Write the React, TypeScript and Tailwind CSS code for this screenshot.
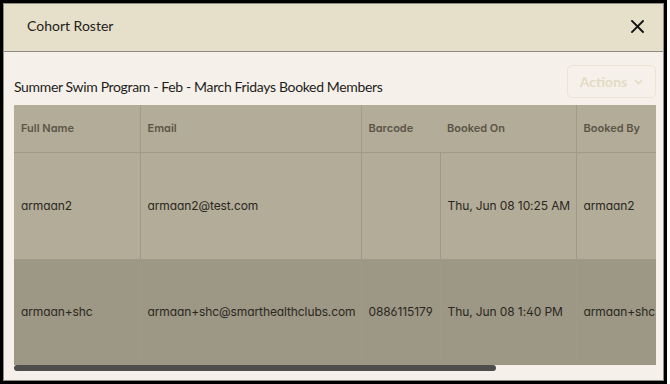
import React from "react";

const rows = [
  {
    name: "armaan2",
    email: "armaan2@test.com",
    barcode: "",
    on: "Thu, Jun 08 10:25 AM",
    by: "armaan2",
    bg: "bg-[#b3ac98]",
    h: "h-[107px]",
  },
  {
    name: "armaan+shc",
    email: "armaan+shc@smarthealthclubs.com",
    barcode: "0886115179",
    on: "Thu, Jun 08 1:40 PM",
    by: "armaan+shc",
    bg: "bg-[#9d9785]",
    h: "h-[106px]",
  },
];

export default function App() {
  return (
    <div className="w-[670px] h-[384px] bg-white">
      <div className="w-[667px] h-[384px] border-[3px] border-black">
        <div className="w-full h-full border border-[#8f8c84] bg-[#f5f1ea] flex flex-col">
          <div className="h-[48px] shrink-0 bg-[#e6dfca] border-b border-[#8d8a82] flex items-center justify-between pl-[23px] pr-[19px] pb-[4px]">
            <span className="text-[14px] text-[#1f1d1a] [font-family:Lato,sans-serif]">
              Cohort Roster
            </span>
            <svg width="13" height="13" viewBox="0 0 13 13" className="mt-[2px]">
              <path d="M1 1 L12 12 M12 1 L1 12" stroke="#111" strokeWidth="1.9" strokeLinecap="square" />
            </svg>
          </div>
          <div className="flex-1 pl-[10px] pr-[7px] pt-[13px]">
            <div className="flex items-end justify-between">
              <span className="mb-[1px] text-[14px] leading-[20px] tracking-[-0.35px] text-[#1f1d1a] [font-family:Lato,sans-serif]">
                Summer Swim Program - Feb - March Fridays Booked Members
              </span>
              <div className="w-[89px] h-[33px] rounded-[5px] border border-[#ebe4d2] flex items-center justify-center gap-[7px] text-[#e4dac5] text-[14px] font-bold [font-family:Lato,sans-serif]">
                <span>Actions</span>
                <svg width="9" height="6" viewBox="0 0 9 6">
                  <path d="M1 1 L4.5 4.5 L8 1" stroke="#e4dac5" strokeWidth="1.6" fill="none" />
                </svg>
              </div>
            </div>
            <div className="mt-[7px] w-[642px] overflow-hidden">
              <table className="table-fixed border-collapse w-[760px] [font-family:Inter,sans-serif] [font-feature-settings:'cv11','ss01']">
                <colgroup>
                  <col className="w-[126px]" />
                  <col className="w-[221px]" />
                  <col className="w-[79px]" />
                  <col className="w-[136px]" />
                  <col className="w-[198px]" />
                </colgroup>
                <thead>
                  <tr className="h-[47px] bg-[#b3ac98] text-[11px] text-[#5b5547] text-left">
                    <th className="pl-[7px] font-semibold">Full Name</th>
                    <th className="pl-[7px] font-semibold border-l border-[#a29b88]">Email</th>
                    <th className="pl-[7px] font-semibold border-l border-[#a29b88]">Barcode</th>
                    <th className="pl-[7px] font-semibold">Booked On</th>
                    <th className="pl-[7px] font-semibold border-l border-[#a29b88]">Booked By</th>
                  </tr>
                </thead>
                <tbody>
                  {rows.map((r) => (
                    <tr key={r.name} className={`${r.h} ${r.bg} border-t border-[#a09985] text-[12px] tracking-[-0.1px] text-[#2a2721] whitespace-nowrap`}>
                      <td className="pl-[7px]">{r.name}</td>
                      <td className="pl-[7px] border-l border-[#a09985]">{r.email}</td>
                      <td className="pl-[7px] border-l border-[#a09985]">{r.barcode}</td>
                      <td className="pl-[7px] border-l border-[#a09985]">{r.on}</td>
                      <td className="pl-[7px] border-l border-[#a09985]">{r.by}</td>
                    </tr>
                  ))}
                </tbody>
              </table>
              <div className="h-[7px] w-full">
                <div className="h-[6px] w-[482px] rounded-full bg-[#4e4e4c]" />
              </div>
            </div>
          </div>
        </div>
      </div>
    </div>
  );
}
